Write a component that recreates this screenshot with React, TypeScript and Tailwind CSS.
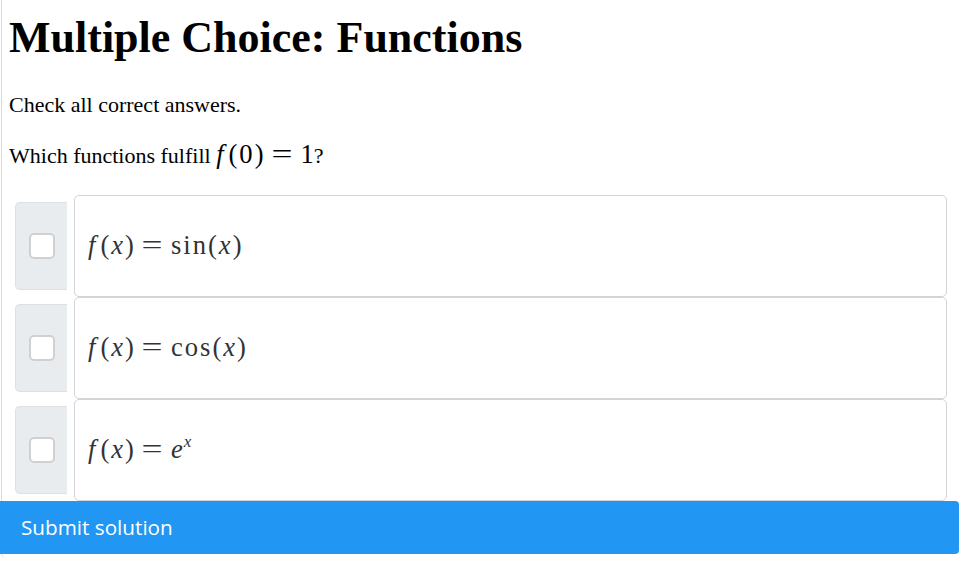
import React from "react";

type Opt = { id: string; rhs: React.ReactNode };

const serif = "font-['Liberation_Serif',_'Times_New_Roman',_serif]";

function Eq() {
    return <span className="mx-[9px] inline-block scale-x-[1.4]">=</span>;
}

function MathF({ arg }: { arg: React.ReactNode }) {
    return (
        <>
            <i className="mr-[3px]">f</i>
            <span>(</span>
            <i>{arg}</i>
            <span>)</span>
        </>
    );
}

const options: Opt[] = [
    {
        id: "sin",
        rhs: (
            <>
                <span>sin</span>
                <span>(</span>
                <i>x</i>
                <span>)</span>
            </>
        ),
    },
    {
        id: "cos",
        rhs: (
            <>
                <span>cos</span>
                <span>(</span>
                <i>x</i>
                <span>)</span>
            </>
        ),
    },
    {
        id: "exp",
        rhs: (
            <>
                <i className="tracking-normal">e</i>
                <sup className="ml-px text-[17px] italic tracking-normal -top-[11px]">x</sup>
            </>
        ),
    },
];

function OptionRow({ opt }: { opt: Opt }) {
    return (
        <div className="flex h-[102px]">
            <div className="my-[7px] flex w-[52px] items-center justify-center rounded-l-[5px] border border-r-0 border-[#dcdfe3] bg-[#e9ecef]">
                <div className="h-[26px] w-[26px] rounded-[5px] border-2 border-[#d0d0d0] bg-white" />
            </div>
            <div className="ml-[7px] flex flex-1 items-center rounded-[5px] border border-[#d3d3d8] bg-white pl-[13px]">
                <span className={`${serif} text-[26.6px] leading-none tracking-[2px] text-[#333] pb-[2px]`}>
                    <MathF arg="x" />
                    <Eq />
                    {opt.rhs}
                </span>
            </div>
        </div>
    );
}

export default function App() {
    return (
        <div className="ml-px w-[959px] min-h-[557px] rounded-bl-[5px] border-l border-[#dcdcdc] pl-[7px] pb-[4px] bg-white">
            <h1 className={`${serif} pt-[12px] text-[44px] font-bold leading-[52px] text-black`}>
                Multiple Choice: Functions
            </h1>

            <p className={`${serif} mt-[24px] text-[22px] leading-[33px] text-black`}>
                Check all correct answers.
            </p>

            <p className={`${serif} mt-[18px] h-[33px] text-[22px] leading-[33px] text-black`}>
                Which functions fulfill{" "}
                <span className="text-[26.6px] leading-none tracking-[2px]">
                    <i className="mr-[3px]">f</i>(0)
                    <Eq />
                    <span className="tracking-normal">1</span>
                </span>
                ?
            </p>

            <div className="mt-[23px] ml-[6px] mr-[13px] flex flex-col">
                {options.map((opt) => (
                    <OptionRow key={opt.id} opt={opt} />
                ))}
            </div>

            <button className="-ml-[9px] block h-[53px] w-[959px] rounded-r-[4px] bg-[#2196f3] pl-[21px] text-left font-['Open_Sans',_sans-serif] text-[20.7px] leading-[53px] text-white">
                Submit solution
            </button>
        </div>
    );
}
